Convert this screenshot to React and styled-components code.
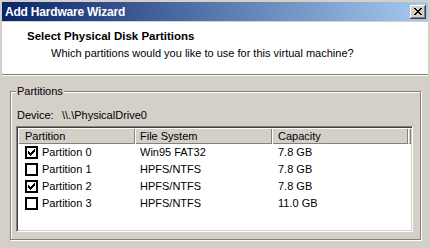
import React from 'react';
import styled, { createGlobalStyle } from 'styled-components';

const GlobalStyle = createGlobalStyle`
  html, body {
    margin: 0;
    padding: 0;
    background: #d4d0c8;
  }
  body {
    font-family: "Liberation Sans", Arial, sans-serif;
    font-size: 11px;
    color: #000;
  }
  * {
    box-sizing: border-box;
  }
`;

const Window = styled.div`
  width: 430px;
  height: 248px;
  overflow: hidden;
  background: #d4d0c8;
  padding: 2px 2px 0 2px;
  display: flex;
  flex-direction: column;
`;

const TitleBar = styled.div`
  flex: none;
  height: 19px;
  display: flex;
  align-items: center;
  justify-content: space-between;
  padding: 0 2px 0 3px;
  background: linear-gradient(to right, #0a246a, #a6caf0);
`;

const TitleText = styled.span`
  color: #fff;
  font-weight: bold;
  font-size: 12px;
  letter-spacing: -0.2px;
`;

const CloseButton = styled.div`
  width: 16px;
  height: 14px;
  background: #d4d0c8;
  box-shadow: inset -1px -1px 0 #404040, inset 1px 1px 0 #fff, inset -2px -2px 0 #808080;
  display: flex;
  align-items: center;
  justify-content: center;
  padding: 0 1px 1px 0;
`;

const Header = styled.div`
  flex: none;
  height: 53px;
  margin-top: 1px;
  background: #fff;
  border-bottom: 1px solid #808080;
  box-shadow: 0 1px 0 #fff;
  padding: 7px 0 0 25px;
`;

const HeaderTitle = styled.div`
  font-weight: bold;
  font-size: 11.5px;
  line-height: 14px;
`;

const HeaderSub = styled.div`
  margin-top: 4px;
  padding-left: 24px;
  line-height: 13px;
`;

const Body = styled.div`
  padding: 10px 7px 0 8px;
`;

const Group = styled.fieldset`
  margin: 0;
  min-width: 0;
  height: 155px;
  padding: 11px 7px 6px 5px;
  border: 1px solid #808080;
  box-shadow: inset 1px 1px 0 #fff, 1px 1px 0 #fff;
`;

const Legend = styled.legend`
  padding: 0 1px;
  line-height: 13px;
  background: #d4d0c8;
  position: relative;
`;

const DeviceRow = styled.div`
  display: flex;
  line-height: 13px;
  padding-left: 1px;
`;

const DeviceLabel = styled.span`
  width: 45px;
`;

const ListView = styled.div`
  margin-top: 4px;
  height: 106px;
  background: #fff;
  border: 1px solid;
  border-color: #808080 #fff #fff #808080;
  padding: 1px;
  box-shadow: inset 1px 1px 0 #404040, inset -1px -1px 0 #d4d0c8;
`;

const columns = '117px 137px 136px 1fr';

const HeaderRow = styled.div`
  display: grid;
  grid-template-columns: ${columns};
  height: 16px;
`;

const HeaderCell = styled.div`
  background: #d4d0c8;
  box-shadow: inset 1px 1px 0 #fff, inset -1px -1px 0 #808080;
  padding-left: ${(p) => p.$pad}px;
  line-height: 16px;
  white-space: nowrap;
`;

const Row = styled.div`
  display: grid;
  grid-template-columns: ${columns};
  height: 17px;
  align-items: center;
`;

const Cell = styled.div`
  padding-left: ${(p) => p.$pad}px;
  display: flex;
  align-items: center;
  gap: 4px;
  white-space: nowrap;
  line-height: 13px;
`;

const Box = styled.span`
  width: 13px;
  height: 13px;
  border: 2px solid #000;
  background: #fff;
  display: flex;
  align-items: center;
  justify-content: center;
`;

const CheckMark = () => (
  <svg width="7" height="7" viewBox="0 0 7 7" shapeRendering="crispEdges">
    {[2, 3, 4, 3, 2, 1, 0].map((y, x) => (
      <rect key={x} x={x} y={y} width="1" height="3" fill="#000" />
    ))}
  </svg>
);

const CloseGlyph = () => (
  <svg width="8" height="7" viewBox="0 0 8 7" shapeRendering="crispEdges">
    {[0, 1, 2, 3, 4, 5, 6].map((y) => {
      const a = y <= 3 ? y : 6 - y;
      return (
        <g key={y}>
          <rect x={a} y={y} width="2" height="1" fill="#000" />
          <rect x={6 - a} y={y} width="2" height="1" fill="#000" />
        </g>
      );
    })}
  </svg>
);

const partitions = [
  { name: 'Partition 0', fs: 'Win95 FAT32', size: '7.8 GB', checked: true },
  { name: 'Partition 1', fs: 'HPFS/NTFS', size: '7.8 GB', checked: false },
  { name: 'Partition 2', fs: 'HPFS/NTFS', size: '7.8 GB', checked: true },
  { name: 'Partition 3', fs: 'HPFS/NTFS', size: '11.0 GB', checked: false },
];

const App = () => {
  return (
    <Window>
      <GlobalStyle />
      <TitleBar>
        <TitleText>Add Hardware Wizard</TitleText>
        <CloseButton>
          <CloseGlyph />
        </CloseButton>
      </TitleBar>
      <Header>
        <HeaderTitle>Select Physical Disk Partitions</HeaderTitle>
        <HeaderSub>Which partitions would you like to use for this virtual machine?</HeaderSub>
      </Header>
      <Body>
        <Group>
          <Legend>Partitions</Legend>
          <DeviceRow>
            <DeviceLabel>Device:</DeviceLabel>
            <span>\\.\PhysicalDrive0</span>
          </DeviceRow>
          <ListView>
            <HeaderRow>
              <HeaderCell $pad={7}>Partition</HeaderCell>
              <HeaderCell $pad={5}>File System</HeaderCell>
              <HeaderCell $pad={6}>Capacity</HeaderCell>
              <HeaderCell $pad={0} />
            </HeaderRow>
            {partitions.map((p) => (
              <Row key={p.name}>
                <Cell $pad={7}>
                  <Box>{p.checked && <CheckMark />}</Box>
                  {p.name}
                </Cell>
                <Cell $pad={5}>{p.fs}</Cell>
                <Cell $pad={6}>{p.size}</Cell>
              </Row>
            ))}
          </ListView>
        </Group>
      </Body>
    </Window>
  );
};

export default App;
